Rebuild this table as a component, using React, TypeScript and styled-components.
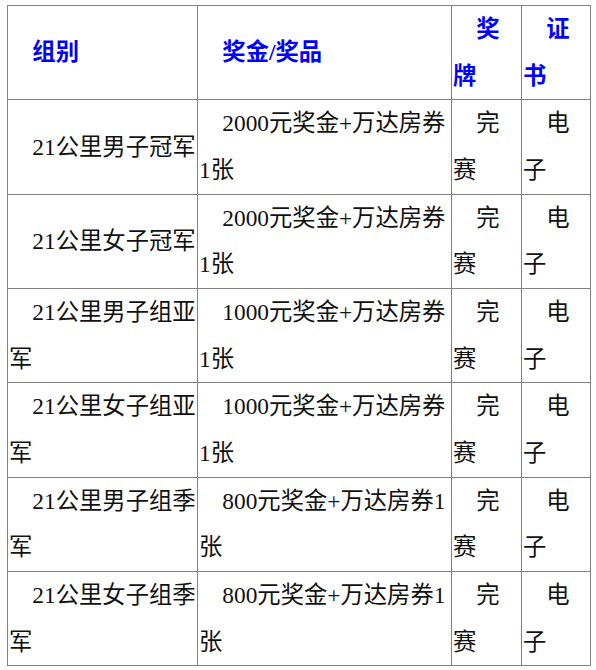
import React from "react";
import styled, { createGlobalStyle } from "styled-components";

const Global = createGlobalStyle`
  html, body { margin: 0; padding: 0; background: #ffffff; }
  body { font-family: "Liberation Serif", "Noto Sans CJK SC", serif; }
`;

const Page = styled.div`
  padding: 5px 0 0 7px;
`;

const Table = styled.table`
  border-collapse: collapse;
  table-layout: fixed;
  width: 583px;
  font-family: "Liberation Serif", "Noto Sans CJK SC", serif;
  font-size: 23.33px;
  line-height: 46.67px;
  color: #000;
`;

const Cell = styled.td<{ $head?: boolean }>`
  border: 1px solid #828282;
  padding: 0 0 0 1px;
  text-indent: 1em;
  vertical-align: middle;
  word-break: normal;
  color: ${(p) => (p.$head ? "#0000ff" : "#111111")};
  font-weight: ${(p) => (p.$head ? 700 : 400)};
  height: ${(p) => (p.$head ? "92px" : "93px")};
`;

const rows: [string, string][] = [
  ["21公里男子冠军", "2000元奖金+万达房券1张"],
  ["21公里女子冠军", "2000元奖金+万达房券1张"],
  ["21公里男子组亚军", "1000元奖金+万达房券1张"],
  ["21公里女子组亚军", "1000元奖金+万达房券1张"],
  ["21公里男子组季军", "800元奖金+万达房券1张"],
  ["21公里女子组季军", "800元奖金+万达房券1张"],
];

export default function App() {
  return (
    <Page>
      <Global />
      <Table>
        <colgroup>
          <col style={{ width: 190 }} />
          <col style={{ width: 254 }} />
          <col style={{ width: 70 }} />
          <col style={{ width: 69 }} />
        </colgroup>
        <tbody>
          <tr>
            <Cell $head>组别</Cell>
            <Cell $head>奖金/奖品</Cell>
            <Cell $head>奖牌</Cell>
            <Cell $head>证书</Cell>
          </tr>
          {rows.map(([g, p], i) => (
            <tr key={i}>
              <Cell>{g}</Cell>
              <Cell>{p}</Cell>
              <Cell>完赛</Cell>
              <Cell>电子</Cell>
            </tr>
          ))}
        </tbody>
      </Table>
    </Page>
  );
}
